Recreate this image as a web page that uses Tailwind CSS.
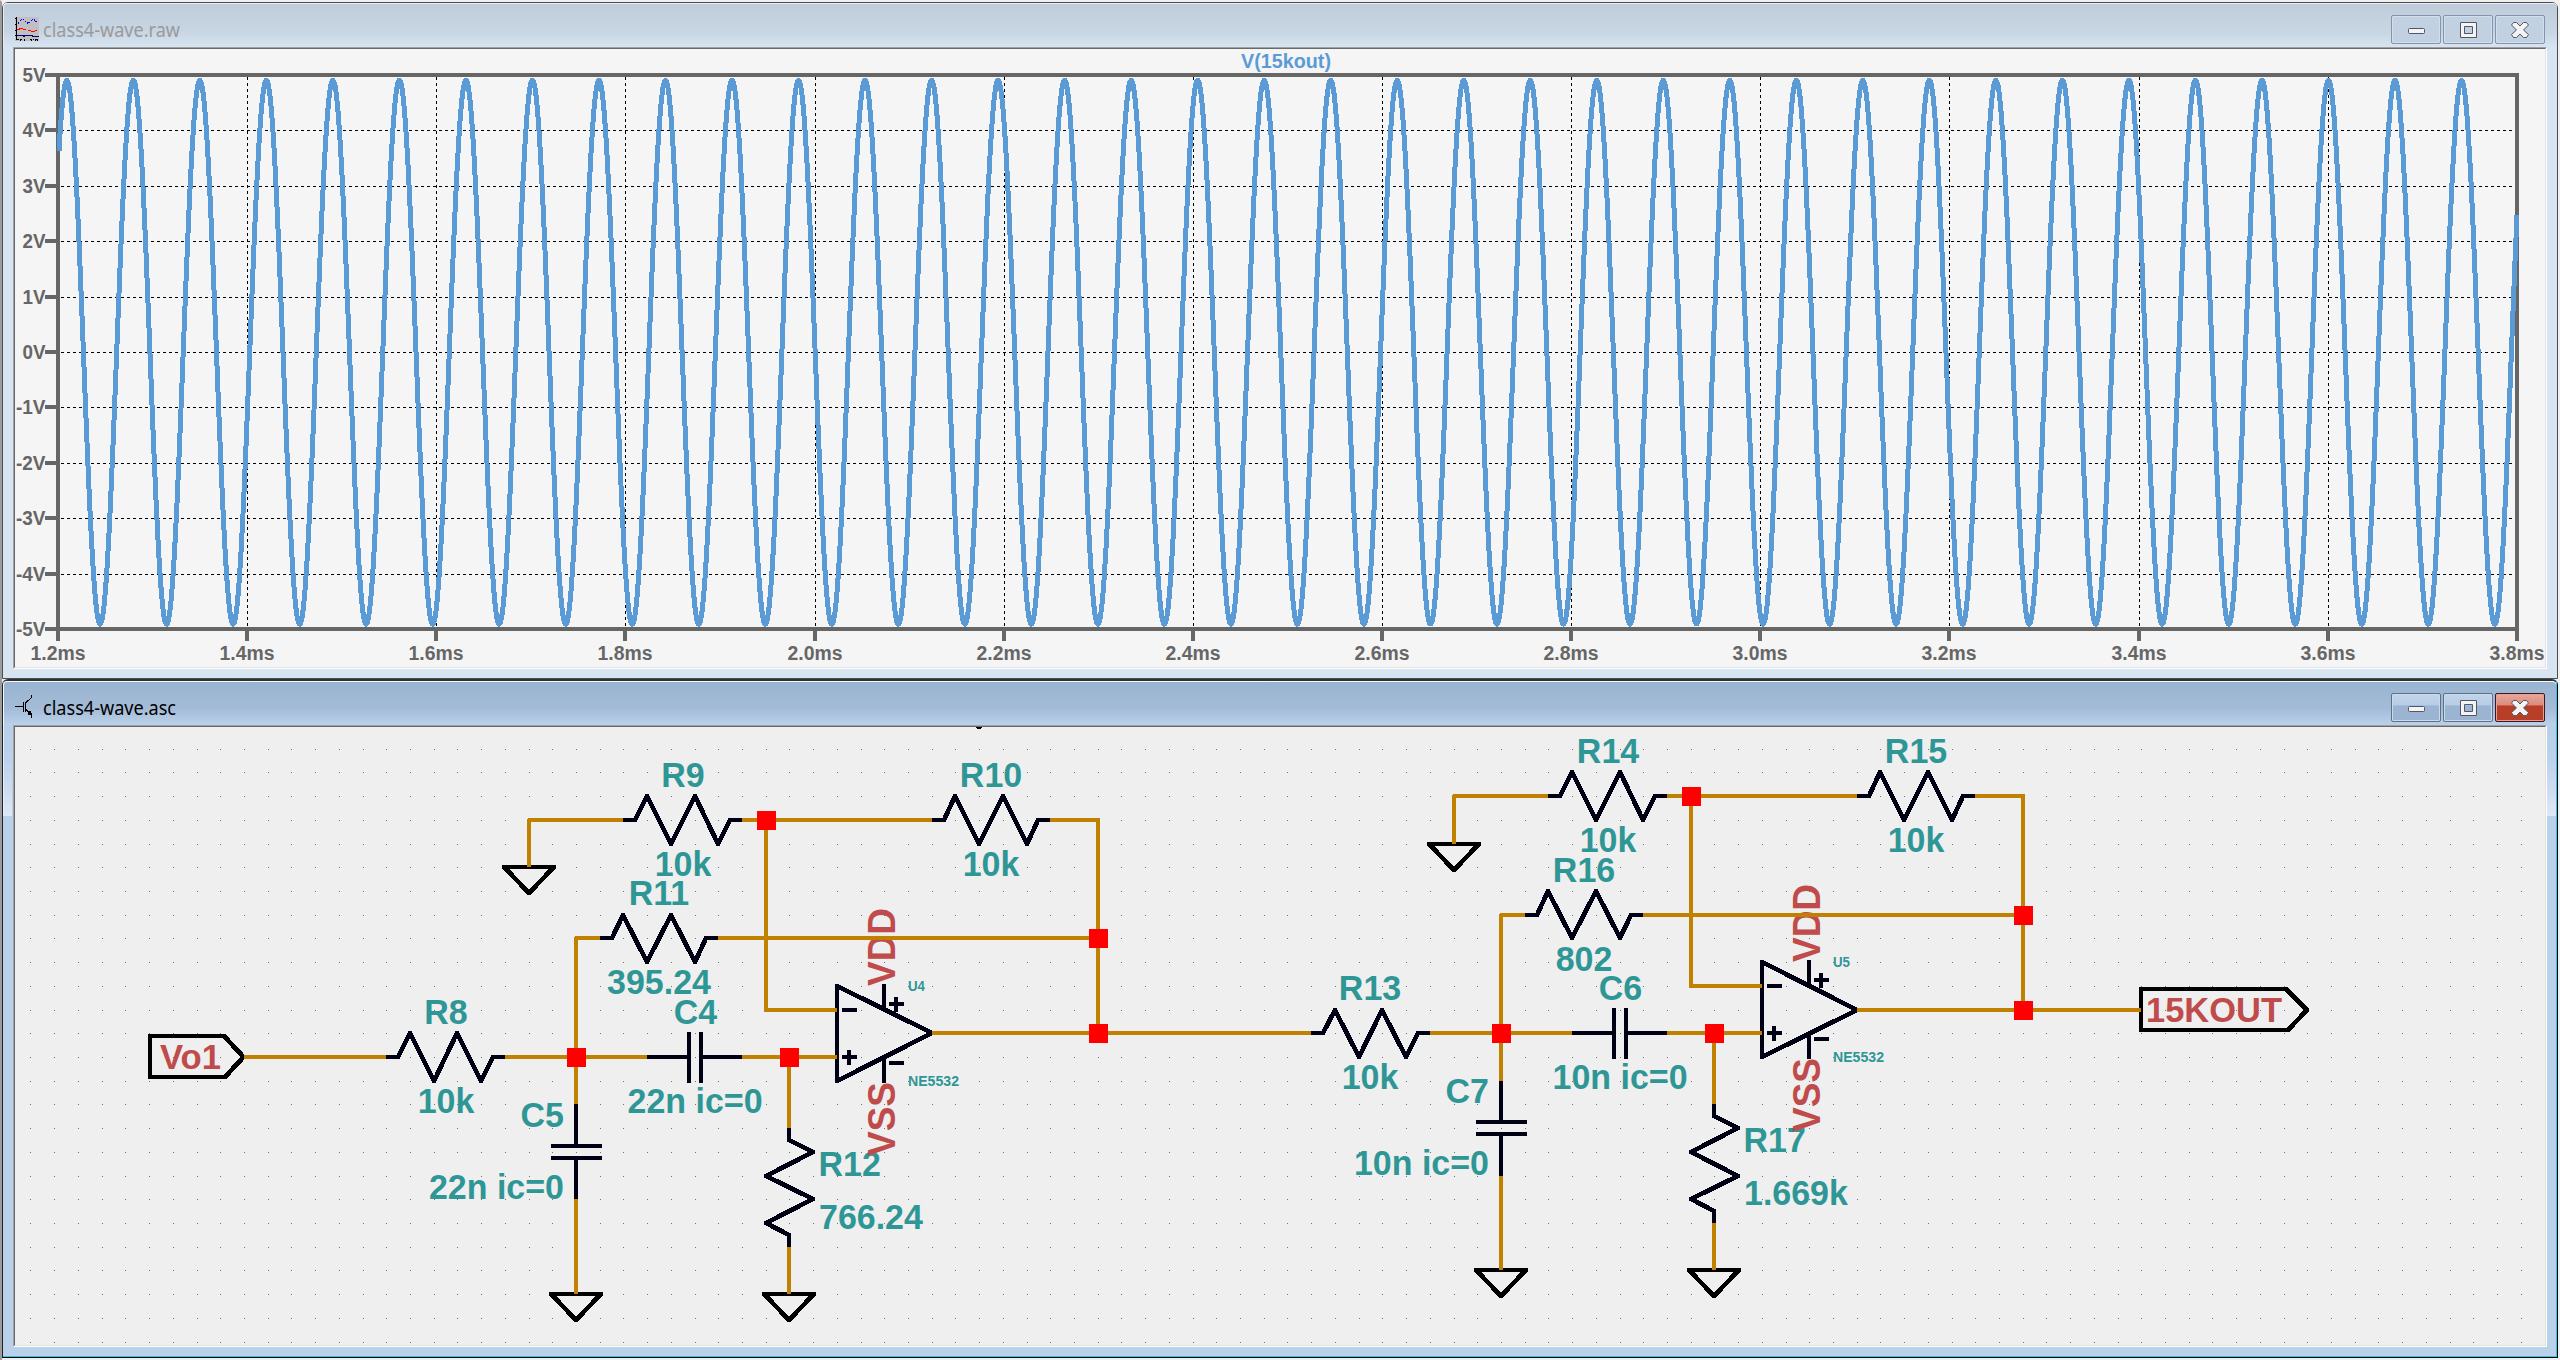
<!DOCTYPE html>
<html lang="en">
<head>
<meta charset="utf-8">
<title>class4-wave</title>
<script src="https://cdn.jsdelivr.net/npm/@tailwindcss/browser@4"></script>
</head>
<body class="flex h-[1360px] w-[2560px] flex-col overflow-hidden border-t-2 border-l-2 border-t-[#f0f0f0] border-l-[#9c9c9c] bg-[#f0f0f0] font-['Liberation_Sans']">

<!-- waveform window -->
<section class="flex h-[677px] w-[2556px] flex-col rounded-t-md border border-[#4c4c4c] bg-[#d7e4f2]">
  <header class="flex h-11 shrink-0 items-start justify-between rounded-t border-t border-l border-[#e6eef6] bg-linear-to-b from-[#bfcddb] via-[#c8d5e3] via-65% to-[#d7e4f2] pr-[12px] pl-[11px]">
    <div class="flex pt-[13px]">
      <svg width="24" height="24" viewBox="0 0 24 24" shape-rendering="crispEdges">
        <rect width="24" height="24" fill="#c0c0c0"/>
        <path d="M1.5 0V22M0 1.5H2M0 7.5H2M0 13.5H2M0 18.5H2M1 22.5H4M6 22.5H7M9 22.5H10M15 22.5H16M18 22.5H19M21 22.5H22" stroke="#000"/>
        <path d="M5.5 22V24M9.500 22V24M16.500 22V24M20.500 22V24M22.500 22V24" stroke="#000"/>
        <path d="M3 6.500L7.500 1.500L13 6.500L18.500 1.500L22.500 6.500" fill="none" stroke="#00f" stroke-dasharray="1.500 1"/>
        <path d="M2 12.500H5M4 11.500H8M8 12.500H11M13 13.500H16M16 14.500H20M20 13.500H22" stroke="#f00"/>
        <path d="M2 18.500H14M8 19.500H10M14 18.500H18M17 19.500H24" stroke="#000080"/>
      </svg>
      <svg width="160" height="26" viewBox="0 0 160 26"><text x="4" y="20" font-size="19" fill="#9a9a9a" textLength="137" lengthAdjust="spacingAndGlyphs" class="font-['Noto_Sans']">class4-wave.raw</text></svg>
    </div>
    <div class="flex gap-0.5 pt-[11px]">
      <button class="flex h-[29px] w-[50px] items-center justify-center rounded-xs border border-[#8494b0] bg-[#c2d1e2] shadow-[inset_0_0_0_1px_#d2deea]"><svg width="18" height="18"><rect x="1.500" y="7.500" width="16" height="5" rx="1" fill="#f4f4f4" stroke="#535666"/></svg></button>
      <button class="flex h-[29px] w-[50px] items-center justify-center rounded-xs border border-[#8494b0] bg-[#c2d1e2] shadow-[inset_0_0_0_1px_#d2deea]"><svg width="18" height="16"><path d="M1.500 .5H17.500V15.500H1.500ZM5.500 4.500V11.500H13.500V4.500Z" fill="#f4f4f4" fill-rule="evenodd" stroke="#535666"/></svg></button>
      <button class="flex h-[29px] w-[50px] items-center justify-center rounded-xs border border-[#8494b0] bg-[#c2d1e2] shadow-[inset_0_0_0_1px_#d2deea]"><svg width="18" height="16"><path d="M2.500 .5H5.500L9 4L12.500 .5H15.500L17.500 3L12.500 8L17.500 12.500L15.500 15.500H12.500L9 12L5.500 15.500H2.500L.5 12.500L5.500 8L.5 3Z" fill="#f4f4f4" stroke="#535666"/></svg></button>
    </div>
  </header>
  <div class="mr-[10px] ml-[10px] h-[622px] border border-t-[#a0a0a0] border-r-white border-b-white border-l-[#a0a0a0]">
    <div class="h-full border border-t-[#696969] border-r-[#e3e3e3] border-b-[#e3e3e3] border-l-[#696969] bg-[#f5f5f5]">
      <svg id="plot" class="block h-[618px] w-[2530px]" viewBox="15 49 2530 618"></svg>
    </div>
  </div>
</section>

<!-- schematic window -->
<section class="flex h-[679px] w-[2556px] flex-col rounded-t-md border border-t-2 border-t-[#2c3436] border-r-black border-b-black border-l-[#1c2226] bg-[#b9d1ea]">
  <div class="flex grow flex-col border-r border-b border-[#2cc6ea]">
    <header class="flex h-11 shrink-0 items-start justify-between rounded-t border-t border-l border-[#f2f8fc] bg-linear-to-b from-[#99b4d1] via-[#a3bbd7] via-60% to-[#b9d1ea] pr-[11px] pl-[11px]">
      <div class="flex pt-[13px]">
        <svg width="24" height="24" viewBox="0 0 24 24" shape-rendering="crispEdges" fill="none" stroke="#000">
          <path d="M0 11.500H9M8.500 7V17M10.500 7V17M11 7.500L16.500 2.500V0M11 14.500L16.500 20V23"/>
          <path d="M12.500 18.500H17M13.500 17.500H16M15 16V20" stroke-width="2"/>
        </svg>
        <svg width="160" height="26" viewBox="0 0 160 26"><text x="4" y="20" font-size="19" fill="#000" textLength="133" lengthAdjust="spacingAndGlyphs" class="font-['Noto_Sans']">class4-wave.asc</text></svg>
      </div>
      <div class="flex gap-0.5 pt-[11px]">
        <button class="flex h-[29px] w-[50px] items-center justify-center rounded-xs border border-[#5f7189] bg-linear-to-b from-[#c1d5ea] from-0% via-[#b7cde5] via-42% to-[#9bb4d1] to-43% shadow-[inset_0_0_0_1px_#c9daec]"><svg width="18" height="18"><rect x="1.500" y="7.500" width="16" height="5" rx="1" fill="#f4f4f4" stroke="#535666"/></svg></button>
        <button class="flex h-[29px] w-[50px] items-center justify-center rounded-xs border border-[#5f7189] bg-linear-to-b from-[#c1d5ea] from-0% via-[#b7cde5] via-42% to-[#9bb4d1] to-43% shadow-[inset_0_0_0_1px_#c9daec]"><svg width="18" height="16"><path d="M1.500 .5H17.500V15.500H1.500ZM5.500 4.500V11.500H13.500V4.500Z" fill="#f4f4f4" fill-rule="evenodd" stroke="#535666"/></svg></button>
        <button class="flex h-[29px] w-[50px] items-center justify-center rounded-xs border border-[#431422] bg-linear-to-b from-[#e9a99c] from-0% via-[#d98a7c] via-42% to-[#b93e28] to-43% shadow-[inset_0_0_0_1px_#e3a196]"><svg width="18" height="16"><path d="M2.500 .5H5.500L9 4L12.500 .5H15.500L17.500 3L12.500 8L17.500 12.500L15.500 15.500H12.500L9 12L5.500 15.500H2.500L.5 12.500L5.500 8L.5 3Z" fill="#f4f4f4" stroke="#535666"/></svg></button>
      </div>
    </header>
    <div class="flex">
      <div class="h-[91px] w-[9px] shrink-0 border-l border-[#e6f0fa] bg-linear-to-b from-[#b7cfe9] via-[#bdd2ec] via-40% to-[#dce8f5]"></div>
      <div class="ml-px h-[622px] w-[2534px] shrink-0 border border-t-[#a0a0a0] border-r-white border-b-white border-l-[#a0a0a0]">
        <div class="h-full border border-t-[#696969] border-r-[#e3e3e3] border-b-[#e3e3e3] border-l-[#696969] bg-[#efefef]">
          <svg id="schematic" class="block h-[618px] w-[2530px]" viewBox="15 727 2530 618"></svg>
        </div>
      </div>
      <div class="h-[91px] w-[9px] shrink-0 bg-linear-to-b from-[#b7cfe9] via-[#bdd2ec] via-40% to-[#dce8f5]"></div>
    </div>
  </div>
</section>

<script>
// ---- waveform plot ----
const gridY = [130, 186, 241, 297, 352, 407, 463, 518, 574];
let p = '';
const tickX = n => Math.round(57.9 + n * 189.15);
let grid = '';
gridY.forEach(y => grid += `M61 ${y + .5}H2515`);
p += `<path d="${grid}" stroke="#000" stroke-dasharray="3 3" shape-rendering="crispEdges"/>`;
grid = '';
for (let n = 1; n < 13; n++) grid += `M${tickX(n) + .5} 77V627`;
p += `<path d="${grid}" stroke="#000" stroke-dasharray="3 3" shape-rendering="crispEdges"/>`;
let ax = 'M45 75H2519M45 629H2517M58 73V641M2517 74V641';
gridY.forEach(y => ax += `M45 ${y}H56`);
for (let n = 1; n < 13; n++) ax += `M${tickX(n)} 629V641`;
p += `<path d="${ax}" stroke="#666" stroke-width="4" fill="none" shape-rendering="crispEdges"/>`;
let wave = '';
for (let x = 59; x <= 2517; x += 1)
  wave += (wave ? 'L' : 'M') + x + ' ' + (352.3 - 272 * Math.cos(2 * Math.PI * (x - 66.8) / 66.52)).toFixed(1);
p += `<path d="${wave}" stroke="#5b9bd5" stroke-width="5" fill="none" stroke-linejoin="round" shape-rendering="crispEdges"/>`;
const ty = [75, ...gridY, 629];
ty.forEach((y, k) => p += `<text x="${k > 5 ? 16 : 22.500}" y="${y + 6.5}" textLength="${k > 5 ? 29.5 : 23}" lengthAdjust="spacingAndGlyphs">${5 - k}V</text>`);
for (let n = 0; n <= 13; n++)
  p += `<text x="${tickX(n) - 27.5}" y="660" textLength="55" lengthAdjust="spacingAndGlyphs">${(1.2 + n * .2).toFixed(1)}ms</text>`;
p += `<text x="1241" y="68" textLength="90" lengthAdjust="spacingAndGlyphs" fill="#5b9bd5">V(15kout)</text>`;
document.getElementById('plot').innerHTML = `<g font-weight="700" font-size="20" fill="#666">${p}</g>`;

// ---- schematic, placed on a regular grid ----
const X = i => Math.floor(30.985 + 23.717 * i), Y = j => Math.floor(749.15 + 23.715 * j);
const P = pts => 'M' + pts.map(([i, j]) => X(i) + ' ' + Y(j)).join('L');
let dots = '', sym = '', blk = '', wires = '', nodes = '', txt = '', red = '';
for (let i = 0; i <= 105; i++) for (let j = 0; j <= 25; j++) dots += `M${X(i)} ${Y(j) + .5}h1`;

const label = (s, x, y, a = 'middle', z = 35.4) => txt += `<text transform="translate(${x} ${y}) scale(.96 1)" text-anchor="${a}" font-size="${z}">${s}</text>`;
const zig = [[0, 0], [.5, 0], [1, -1], [2, 1], [3, -1], [4, 1], [4.5, 0], [5, 0]];
function resH(i, j, name, val) {
  sym += P(zig.map(([a, b]) => [i + a, j + b]));
  label(name, X(i + 2.5), Y(j) - 33.5);
  label(val, X(i + 2.5), Y(j) + 55.5);
}
function resV(i, j, name, val) {
  sym += P(zig.map(([a, b]) => [i - b, j + a]));
  label(name, X(i) + 29.5, Y(j + 2) - .5, 'start');
  label(val, X(i) + 30, Y(j + 2) + 52.500, 'start');
}
function capH(i, j, name, val) {
  const c = X(i + 2), y = Y(j);
  sym += `M${X(i)} ${y}H${c - 6}M${c + 6} ${y}H${X(i + 4)}M${c - 6} ${y - 25}v51M${c + 6} ${y - 25}v51`;
  label(name, c + .5, y - 33.5);
  label(val, c, y + 55.5);
}
function capV(i, j, name, val) {
  const c = Y(j + 2), x = X(i);
  sym += `M${x} ${Y(j)}V${c - 6}M${x} ${c + 6}V${Y(j + 4)}M${x - 25} ${c - 6}h51M${x - 25} ${c + 6}h51`;
  label(name, x - 12, c - 25.500, 'end');
  label(val, x - 12, c + 46.500, 'end');
}
function gnd(i, j) {
  const x = X(i), y = Y(j);
  blk += `M${x - 25} ${y}H${x + 25}L${x} ${y + 26}Z`;
}
function opamp(i, j, name) {
  const x = X(i), m = X(i + 2);
  sym += P([[i, j], [i, j + 4], [i + 4, j + 2]]) + 'Z';
  sym += `M${m} ${Y(j) - 2}V${Y(j + 1)}M${m} ${Y(j + 3)}V${Y(j + 4) + 2}`;
  sym += `M${x + 5} ${Y(j + 1)}h15M${x + 5} ${Y(j + 3)}h15M${x + 12} ${Y(j + 3) - 7}v15`;
  sym += `M${m + 5} ${Y(j) + 18}h15M${m + 12} ${Y(j) + 11}v15M${m + 5} ${Y(j + 3) + 6}h15`;
  label(name, m + 24, Y(j) + 4.500, 'start', 13.8);
  txt += `<text x="${m + 24}" y="${Y(j + 4) + 5}" font-size="13.8" textLength="51" lengthAdjust="spacingAndGlyphs">NE5532</text>`;
  red += `<text transform="translate(${m + 11} ${Y(j)}) rotate(-90)" font-size="39.5" textLength="78" lengthAdjust="spacingAndGlyphs">VDD</text>`;
  red += `<text transform="translate(${m + 11} ${Y(j + 4) + 75}) rotate(-90)" font-size="39.5" textLength="74" lengthAdjust="spacingAndGlyphs">VSS</text>`;
}
const wire = (...pts) => wires += P(pts);
const node = (i, j) => nodes += `<rect x="${X(i) - 9}" y="${Y(j) - 9}" width="19" height="19"/>`;

// first stage
resH(15, 13, 'R8', '10k'); resH(25, 3, 'R9', '10k'); resH(38, 3, 'R10', '10k'); resH(24, 8, 'R11', '395.24');
capH(26, 13, 'C4', '22n ic=0'); capV(23, 15, 'C5', '22n ic=0'); resV(32, 16, 'R12', '766.24'); opamp(34, 10, 'U4');
gnd(21, 5); gnd(23, 23); gnd(32, 23); gnd(40, -2);
wire([9, 13], [15, 13]); wire([20, 13], [26, 13]); wire([23, 15], [23, 8], [24, 8]); wire([23, 19], [23, 23]);
wire([21, 5], [21, 3], [25, 3]); wire([30, 3], [38, 3]); wire([31, 3], [31, 11], [34, 11]); wire([43, 3], [45, 3], [45, 12]);
wire([29, 8], [45, 8]); wire([30, 13], [34, 13]); wire([32, 13], [32, 16]); wire([32, 21], [32, 23]); wire([38, 12], [54, 12]);
node(23, 13); node(32, 13); node(31, 3); node(45, 8); node(45, 12);

// second stage
resH(54, 12, 'R13', '10k'); resH(64, 2, 'R14', '10k'); resH(77, 2, 'R15', '10k'); resH(63, 7, 'R16', '802');
capH(65, 12, 'C6', '10n ic=0'); capV(62, 14, 'C7', '10n ic=0'); resV(71, 15, 'R17', '1.669k'); opamp(73, 9, 'U5');
gnd(60, 4); gnd(62, 22); gnd(71, 22);
wire([59, 12], [65, 12]); wire([62, 14], [62, 7], [63, 7]); wire([62, 18], [62, 22]);
wire([60, 4], [60, 2], [64, 2]); wire([69, 2], [77, 2]); wire([70, 2], [70, 10], [73, 10]); wire([82, 2], [84, 2], [84, 11]);
wire([68, 7], [84, 7]); wire([69, 12], [73, 12]); wire([71, 12], [71, 15]); wire([71, 20], [71, 22]); wire([77, 11], [89, 11]);
node(62, 12); node(71, 12); node(70, 2); node(84, 7); node(84, 11);

// port flags
blk += `M150 1036H224L243.500 1057L225 1077H150Z`;
blk += `M2141 989H2286L2307 1010L2288 1030H2141Z`;
red += `<text x="160" y="1068.500" font-size="35.4" textLength="61" lengthAdjust="spacingAndGlyphs">Vo1</text><text x="2146" y="1021.500" font-size="35.4" textLength="136" lengthAdjust="spacingAndGlyphs">15KOUT</text>`;

const line = (d, c, w) => `<path d="${d}" stroke="${c}" stroke-width="${w}" fill="none" stroke-linejoin="round" shape-rendering="crispEdges"/>`;
document.getElementById('schematic').innerHTML =
  `<path d="${dots}" stroke="#707070" shape-rendering="crispEdges"/>` +
  `<g font-weight="700" fill="#2f9696">${txt}</g><g font-weight="700" fill="#c04b4b">${red}</g>` +
  line(sym, '#000014', 4.7) + line(blk, '#000', 4.7) + line(wires, '#c08000', 4) + `<g fill="#f00">${nodes}</g>`;
</script>
</body>
</html>
